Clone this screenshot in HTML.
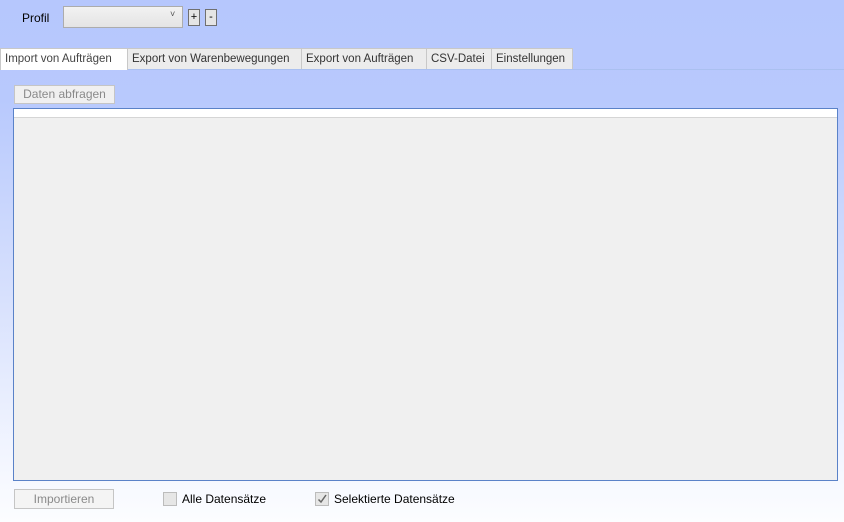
<!DOCTYPE html>
<html><head><style>
*{box-sizing:border-box;margin:0;padding:0}
body{width:844px;height:522px;overflow:hidden;font-family:"Liberation Sans",sans-serif;font-size:12px;color:#000;position:relative;
background:linear-gradient(to bottom,#b6c7fd 0px,#b8c9fd 100px,#d8e1fd 300px,#f3f6ff 460px,#fcfdff 522px)}
.a{position:absolute}
.tab{position:absolute;top:48px;height:21px;border:1px solid #c8c8c8;border-bottom:none;background:#ececec;color:#333;padding:4px 0 0 4px;font-size:11.5px;white-space:nowrap;overflow:hidden}
</style></head><body>
<div class="a" style="left:22px;top:11px;font-size:12px">Profil</div>
<div class="a" style="left:63px;top:6px;width:120px;height:22px;border:1px solid #acacac;background:linear-gradient(#f2f2f2,#e4e4e4)"><span class="a" style="left:106px;top:2px;font-size:9px;color:#555">˅</span></div>
<div class="a" style="left:188px;top:9px;width:12px;height:17px;border:1px solid #707070;background:#e5e5e5;font-size:11px;text-align:center;line-height:15px">+</div>
<div class="a" style="left:205px;top:9px;width:12px;height:17px;border:1px solid #707070;background:#e5e5e5;font-size:11px;text-align:center;line-height:15px">-</div>
<div class="a" style="left:0;top:69px;width:844px;height:1px;background:#aac0f0"></div>
<div class="tab" style="left:0;width:128px;height:22px;background:#fff;border-color:#c8c8c8;color:#444">Import von Aufträgen</div>
<div class="tab" style="left:127px;width:175px">Export von Warenbewegungen</div>
<div class="tab" style="left:301px;width:126px">Export von Aufträgen</div>
<div class="tab" style="left:426px;width:66px">CSV-Datei</div>
<div class="tab" style="left:491px;width:82px">Einstellungen</div>
<div class="a" style="left:14px;top:85px;width:101px;height:19px;border:1px solid #c5c5c5;background:#f0f0f0;color:#8a8a8a;text-align:center;line-height:17px">Daten abfragen</div>
<div class="a" style="left:13px;top:108px;width:825px;height:373px;border:1px solid #5a82c8;background:#f0f0f0">
<div style="height:9px;background:#fff;border-bottom:1px solid #d5d5d5"></div></div>
<div class="a" style="left:14px;top:489px;width:100px;height:20px;border:1px solid #c5c5c5;background:#f4f4f4;color:#8a8a8a;text-align:center;line-height:18px">Importieren</div>
<div class="a" style="left:163px;top:492px;width:14px;height:14px;border:1px solid #bcbcbc;background:#e6e6e6"></div>
<div class="a" style="left:182px;top:492px">Alle Datensätze</div>
<div class="a" style="left:315px;top:492px;width:14px;height:14px;border:1px solid #bcbcbc;background:#e6e6e6"><svg width="12" height="12" style="position:absolute;left:0;top:0"><path d="M2.5 6.5 L5 9 L10 2" stroke="#666" stroke-width="1.5" fill="none"/></svg></div>
<div class="a" style="left:334px;top:492px">Selektierte Datensätze</div>
</body></html>
